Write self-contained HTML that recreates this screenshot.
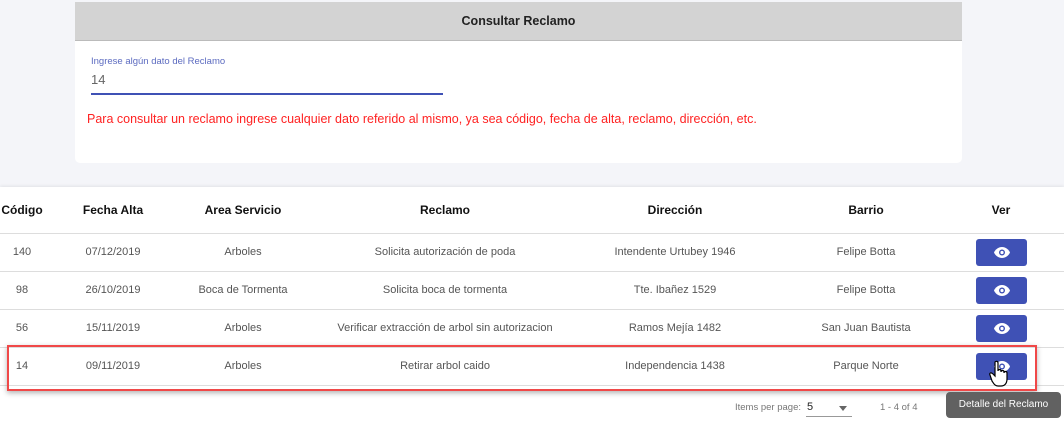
<!DOCTYPE html>
<html><head><meta charset="utf-8"><style>
body{margin:0;width:1064px;height:423px;background:#f4f5f9;font-family:"Liberation Sans",sans-serif;position:relative;overflow:hidden}
.card{position:absolute;left:75px;top:2px;width:887px;height:161px;background:#fff;border-radius:0 0 5px 5px}
.hd{height:38px;background:#d3d3d3;border-bottom:1px solid #bbb;text-align:center;line-height:38px;font-size:12.5px;color:#222;font-weight:bold}
.lbl{position:absolute;left:16px;top:54px;font-size:9.5px;color:#5c6bc0}
.val{position:absolute;left:16px;top:70px;font-size:13px;color:#666}
.ul{position:absolute;left:16px;top:91px;width:352px;height:2px;background:#3f51b5}
.msg{position:absolute;left:12px;top:110px;font-size:12.5px;color:#f22}
.tbl{position:absolute;left:0;top:187px;width:1064px;height:236px;background:#fff;box-shadow:0 -1px 3px rgba(0,0,0,.08)}
.row{position:absolute;left:0;width:1064px;height:37px;border-bottom:1px solid #ddd}
.c{position:absolute;top:0;line-height:37px;font-size:11px;color:#555;text-align:center;transform:translateX(-50%);white-space:nowrap}
.h .c{font-size:12px;color:#111;font-weight:bold;line-height:46px}
.btn{position:absolute;left:976px;top:5px;width:51px;height:27px;background:#3f51b5;border-radius:3px}
.btn svg{position:absolute;left:17px;top:7px}
.red{position:absolute;left:7px;top:345px;width:1026px;height:42px;border:2px solid #f04848;box-shadow:0 2px 5px rgba(0,0,0,.3)}
.pg{position:absolute;top:402px;font-size:9.5px;color:#777}
.tip{position:absolute;left:946px;top:392px;width:115px;height:26px;background:#616161;border-radius:4px;color:#fff;font-size:10px;line-height:26px;text-align:center}
</style></head><body>
<div class="card"><div class="hd">Consultar Reclamo</div>
<div class="lbl">Ingrese algún dato del Reclamo</div><div class="val">14</div><div class="ul"></div>
<div class="msg">Para consultar un reclamo ingrese cualquier dato referido al mismo, ya sea código, fecha de alta, reclamo, dirección, etc.</div></div>
<div class="tbl">
<div class="row h" style="top:0;height:46px"><div class="c" style="left:22px">Código</div><div class="c" style="left:113px">Fecha Alta</div><div class="c" style="left:243px">Area Servicio</div><div class="c" style="left:445px">Reclamo</div><div class="c" style="left:675px">Dirección</div><div class="c" style="left:866px">Barrio</div><div class="c" style="left:1001px">Ver</div></div>
<div class="row" style="top:47px"><div class="c" style="left:22px">140</div><div class="c" style="left:113px">07/12/2019</div><div class="c" style="left:243px">Arboles</div><div class="c" style="left:445px">Solicita autorización de poda</div><div class="c" style="left:675px">Intendente Urtubey 1946</div><div class="c" style="left:866px">Felipe Botta</div><div class="btn"><svg width="18" height="13" viewBox="0 0 18 13"><path d="M9 1C5 1 2 4 1 6.5 2 9 5 12 9 12s7-3 8-5.5C16 4 13 1 9 1z" fill="#fff"/><circle cx="9" cy="6.5" r="3" fill="#3f51b5"/><circle cx="9" cy="6.5" r="1.6" fill="#fff"/></svg></div></div>
<div class="row" style="top:85px"><div class="c" style="left:22px">98</div><div class="c" style="left:113px">26/10/2019</div><div class="c" style="left:243px">Boca de Tormenta</div><div class="c" style="left:445px">Solicita boca de tormenta</div><div class="c" style="left:675px">Tte. Ibañez 1529</div><div class="c" style="left:866px">Felipe Botta</div><div class="btn"><svg width="18" height="13" viewBox="0 0 18 13"><path d="M9 1C5 1 2 4 1 6.5 2 9 5 12 9 12s7-3 8-5.5C16 4 13 1 9 1z" fill="#fff"/><circle cx="9" cy="6.5" r="3" fill="#3f51b5"/><circle cx="9" cy="6.5" r="1.6" fill="#fff"/></svg></div></div>
<div class="row" style="top:123px"><div class="c" style="left:22px">56</div><div class="c" style="left:113px">15/11/2019</div><div class="c" style="left:243px">Arboles</div><div class="c" style="left:445px">Verificar extracción de arbol sin autorizacion</div><div class="c" style="left:675px">Ramos Mejía 1482</div><div class="c" style="left:866px">San Juan Bautista</div><div class="btn"><svg width="18" height="13" viewBox="0 0 18 13"><path d="M9 1C5 1 2 4 1 6.5 2 9 5 12 9 12s7-3 8-5.5C16 4 13 1 9 1z" fill="#fff"/><circle cx="9" cy="6.5" r="3" fill="#3f51b5"/><circle cx="9" cy="6.5" r="1.6" fill="#fff"/></svg></div></div>
<div class="row" style="top:161px"><div class="c" style="left:22px">14</div><div class="c" style="left:113px">09/11/2019</div><div class="c" style="left:243px">Arboles</div><div class="c" style="left:445px">Retirar arbol caido</div><div class="c" style="left:675px">Independencia 1438</div><div class="c" style="left:866px">Parque Norte</div><div class="btn"><svg width="18" height="13" viewBox="0 0 18 13"><path d="M9 1C5 1 2 4 1 6.5 2 9 5 12 9 12s7-3 8-5.5C16 4 13 1 9 1z" fill="#fff"/><circle cx="9" cy="6.5" r="3" fill="#3f51b5"/><circle cx="9" cy="6.5" r="1.6" fill="#fff"/></svg></div></div>
</div>
<div class="red"></div>
<svg style="position:absolute;left:988px;top:360px" width="22" height="28" viewBox="0 0 22 28"><path d="M7 2c1-1 3-1 3 1v8c0-2 3-2 3 0v1c0-2 3-2 3 0v1c0-2 3-2 3 0v6c0 4-2 7-6 7h-3c-3 0-4-2-6-5L2 15c-1-2 1-3 3-1l2 2z" fill="#fff" stroke="#000" stroke-width="1.2"/></svg>
<div class="pg" style="left:735px">Items per page:</div>
<div class="pg" style="left:807px;color:#222;font-size:11px;top:401px">5</div>
<div style="position:absolute;left:806px;top:416px;width:46px;height:1px;background:#999"></div>
<div style="position:absolute;left:839px;top:406px;border:4px solid transparent;border-top:5px solid #666"></div>
<div class="pg" style="left:880px">1 - 4 of 4</div>
<div class="tip">Detalle del Reclamo</div>
</body></html>
